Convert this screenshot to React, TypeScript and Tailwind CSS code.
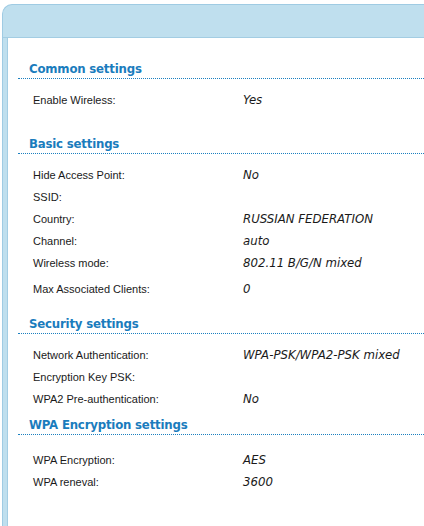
import React from 'react'

type Row = { label: string; value?: string; extra?: string }

interface Section {
  title: string
  gap: string
  pad: string
  rows: Row[]
}

const sections: Section[] = [
  {
    title: 'Common settings',
    gap: 'mt-[22px]',
    pad: 'pt-[10px]',
    rows: [{ label: 'Enable Wireless:', value: 'Yes' }],
  },
  {
    title: 'Basic settings',
    gap: 'mt-[24px]',
    pad: 'pt-[10px]',
    rows: [
      { label: 'Hide Access Point:', value: 'No' },
      { label: 'SSID:' },
      { label: 'Country:', value: 'RUSSIAN FEDERATION' },
      { label: 'Channel:', value: 'auto' },
      { label: 'Wireless mode:', value: '802.11 B/G/N mixed' },
      { label: 'Max Associated Clients:', value: '0', extra: 'mt-[4px]' },
    ],
  },
  {
    title: 'Security settings',
    gap: 'mt-[15px]',
    pad: 'pt-[10px]',
    rows: [
      { label: 'Network Authentication:', value: 'WPA-PSK/WPA2-PSK mixed' },
      { label: 'Encryption Key PSK:' },
      { label: 'WPA2 Pre-authentication:', value: 'No' },
    ],
  },
  {
    title: 'WPA Encryption settings',
    gap: 'mt-[6px]',
    pad: 'pt-[14px]',
    rows: [
      { label: 'WPA Encryption:', value: 'AES' },
      { label: 'WPA reneval:', value: '3600' },
    ],
  },
]

export default function App() {
  return (
    <div className="w-[424px] h-[526px] overflow-hidden bg-white pt-[4px] pl-[2px]">
      {/* outer frame */}
      <div className="w-[440px] h-[540px] bg-[#bfdfee] border-l border-t border-[#9fcbe3] rounded-tl-[10px] flex flex-col">
        <div className="h-[33px] border-b border-[#a3cde3]" />
        <div className="flex-1 ml-[4px] bg-white border-l border-[#a3cde3] pl-[10px]">
          {sections.map((s) => (
            <div key={s.title} className={s.gap}>
              <div className="h-[19px] leading-[18px] pl-[11px] border-b border-dotted border-[#1b80c0] text-[11.75px] font-bold text-[#1a7cbd] font-['DejaVu_Sans',sans-serif] tracking-[-0.2px]">
                {s.title}
              </div>
              <div className={s.pad}>
                {s.rows.map((r) => (
                  <div key={r.label} className={`flex items-baseline h-[22px] leading-[22px] ${r.extra ?? ''}`}>
                    <span className="w-[225px] pl-[15px] text-[11px] text-[#1a1a1a] font-['Liberation_Sans',Arial,sans-serif]">
                      {r.label}
                    </span>
                    <span className="text-[11.75px] italic text-[#1a1a1a] font-['DejaVu_Sans',Verdana,sans-serif]">
                      {r.value}
                    </span>
                  </div>
                ))}
              </div>
            </div>
          ))}
        </div>
      </div>
    </div>
  )
}
